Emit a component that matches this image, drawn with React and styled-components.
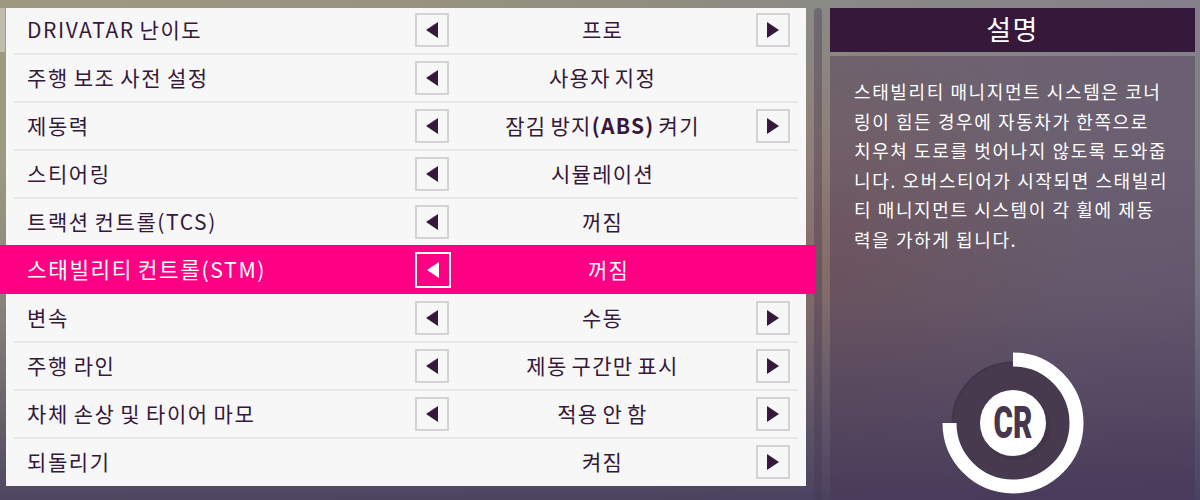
import styled, { createGlobalStyle } from 'styled-components'

const rows = [
  { label: 'DRIVATAR 난이도', value: '프로', left: true, right: true },
  { label: '주행 보조 사전 설정', value: '사용자 지정', left: true },
  { label: '제동력', value: <>잠김 방지<b>(ABS)</b> 켜기</>, left: true, right: true },
  { label: '스티어링', value: '시뮬레이션', left: true },
  { label: '트랙션 컨트롤(TCS)', value: '꺼짐', left: true },
  { label: '스태빌리티 컨트롤(STM)', value: '꺼짐', left: true, active: true },
  { label: '변속', value: '수동', left: true, right: true },
  { label: '주행 라인', value: '제동 구간만 표시', left: true, right: true },
  { label: '차체 손상 및 타이어 마모', value: '적용 안 함', left: true, right: true },
  { label: '되돌리기', value: '켜짐', right: true },
]

export default function App() {
  return (
    <>
      <GlobalStyle />
      <Page>
        <List>
          {rows.map((row) => (
            <Row key={row.label} $active={row.active}>
              <Label $active={row.active}>{row.label}</Label>
              {row.left ? <ArrowButton $active={row.active}><ArrowLeft $active={row.active} /></ArrowButton> : <span />}
              <Value $active={row.active}>{row.value}</Value>
              {row.right ? <ArrowButton><ArrowRight /></ArrowButton> : <span />}
            </Row>
          ))}
        </List>
        <Scrollbar />
        <Side>
          <SideTitle>설명</SideTitle>
          <SideBody>
            <Description>
              스태빌리티 매니지먼트 시스템은 코너<br />
              링이 힘든 경우에 자동차가 한쪽으로<br />
              치우쳐 도로를 벗어나지 않도록 도와줍<br />
              니다. 오버스티어가 시작되면 스태빌리<br />
              티 매니지먼트 시스템이 각 휠에 제동<br />
              력을 가하게 됩니다.
            </Description>
            <Badge>
              <svg width="142" height="142" viewBox="0 0 142 142">
                <circle cx="71" cy="71" r="60.5" fill="#483a4e" stroke="#42354a" strokeWidth="2" />
                <path d="M71 7.5 A63.5 63.5 0 1 1 7.5 71" fill="none" stroke="#fff" strokeWidth="14" />
                <circle cx="74" cy="74" r="34" fill="#3f3246" opacity="0.6" />
                <circle cx="71" cy="71" r="33" fill="#fff" />
              </svg>
              <BadgeText>CR</BadgeText>
            </Badge>
          </SideBody>
        </Side>
      </Page>
    </>
  )
}

const GlobalStyle = createGlobalStyle`
  html, body {
    margin: 0;
    padding: 0;
    background: #5a4a5c;
  }
  #root {
    width: 1200px;
    height: 500px;
    overflow: hidden;
  }
`

const Page = styled.div`
  width: 1200px;
  height: 500px;
  box-sizing: border-box;
  padding: 8px 5px 0 6px;
  display: flex;
  align-items: flex-start;
  font-family: "Noto Sans CJK KR", "Noto Sans", sans-serif;
  background:
    linear-gradient(180deg, transparent 0%, transparent 30%, rgba(58, 50, 88, 0.2) 60%, rgba(58, 50, 88, 0.8) 100%),
    radial-gradient(ellipse 280px 260px at 815px 270px, rgba(150, 110, 95, 0.7), transparent),
    linear-gradient(90deg, #9e9a82 0%, #938f7e 50%, #8a8a85 68%, #84808a 100%);
`

const List = styled.div`
  width: 800px;
  height: 478px;
  background: #f7f7f7;
  flex-shrink: 0;
`

const Row = styled.div`
  height: 48px;
  box-sizing: border-box;
  display: grid;
  grid-template-columns: 388px 34px 1fr 34px;
  align-items: center;
  padding: 0 16px 0 21px;
  position: relative;
  color: #35183a;

  &:first-child {
    margin-top: -2px;
  }

  /* pale sliver left of the first row */
  &:first-child::before {
    content: '';
    position: absolute;
    left: -6px;
    top: 2px;
    width: 5px;
    height: 44px;
    background: rgba(255, 255, 255, 0.35);
  }

  ${(p) => p.$active && `
    background: #ff0084;
    color: #fff;
    margin: 0 -10px 0 -6px;
    padding: 0 26px 0 27px;
    box-shadow: 0 -1px 0 #ff0084;
    z-index: 1;
  `}

  &:not(:last-child)::after {
    content: '';
    position: absolute;
    left: 8px;
    right: 8px;
    bottom: -1px;
    height: 2px;
    background: #e9e8e9;
    ${(p) => p.$active && `display: none;`}
  }
`

const Label = styled.div`
  font-size: ${(p) => (p.$active ? '21.3px' : '21px')};
  letter-spacing: 1.6px;
  word-spacing: -1.5px;
  line-height: 28px;
  padding-bottom: 2px;
  white-space: nowrap;
`

const Value = styled.div`
  font-size: 21px;
  letter-spacing: 1.3px;
  word-spacing: -2px;
  line-height: 28px;
  padding-bottom: 2px;
  text-align: center;
  white-space: nowrap;
  padding-left: ${(p) => (p.$active ? '12px' : '0')};
  b {
    font-weight: 700;
  }
`

const ArrowButton = styled.div`
  width: ${(p) => (p.$active ? '36px' : '34px')};
  height: ${(p) => (p.$active ? '36px' : '34px')};
  box-sizing: border-box;
  border: 2px solid ${(p) => (p.$active ? '#fff' : '#d4d2d4')};
  display: flex;
  align-items: center;
  justify-content: center;
`

const ArrowLeft = styled.div`
  width: 0;
  height: 0;
  border-top: 8px solid transparent;
  border-bottom: 8px solid transparent;
  border-right: 12px solid ${(p) => (p.$active ? '#fff' : '#35183a')};
`

const ArrowRight = styled.div`
  width: 0;
  height: 0;
  border-top: 8px solid transparent;
  border-bottom: 8px solid transparent;
  border-left: 12px solid #35183a;
`

const Scrollbar = styled.div`
  width: 8px;
  height: 492px;
  margin-left: 8px;
  border-radius: 4px 4px 0 0;
  background: rgba(70, 55, 80, 0.4);
  flex-shrink: 0;
`

const Side = styled.div`
  width: 365px;
  margin-left: 8px;
  display: flex;
  flex-direction: column;
  gap: 4px;
  flex-shrink: 0;
`

const SideTitle = styled.div`
  height: 44px;
  background: #35183a;
  color: #fff;
  font-size: 27px;
  letter-spacing: 1.5px;
  line-height: 42px;
  text-align: center;
`

const SideBody = styled.div`
  height: 444px;
  box-sizing: border-box;
  padding: 21px 20px 0 24px;
  background: rgba(72, 50, 80, 0.42);
  color: #fff;
  display: flex;
  flex-direction: column;
`

const Description = styled.p`
  margin: 0;
  font-size: 18px;
  letter-spacing: 1.6px;
  line-height: 29.6px;
  white-space: nowrap;
`

const Badge = styled.div`
  position: relative;
  width: 142px;
  height: 142px;
  margin: 97px 0 0 88px;
  svg {
    display: block;
  }
`

const BadgeText = styled.span`
  position: absolute;
  inset: 0;
  display: flex;
  align-items: center;
  justify-content: center;
  font-family: Roboto, sans-serif;
  font-weight: 900;
  font-size: 45px;
  color: #47364f;
  transform: scaleX(0.66);
`
